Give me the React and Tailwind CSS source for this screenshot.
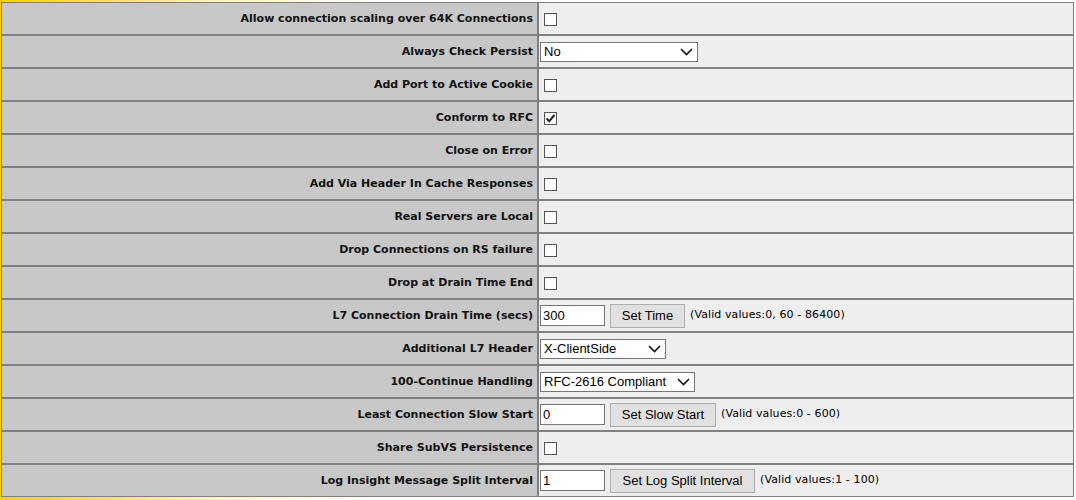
import React from "react";

const Checkbox = ({ checked }) => (
  <span className="ml-[5px] mt-[1px] inline-flex h-[13px] w-[13px] items-center justify-center border border-[#555555] bg-white">
    {checked && (
      <svg width="11" height="11" viewBox="0 0 11 11">
        <path d="M1.5 5.5 L4.2 8.2 L9.5 2" fill="none" stroke="#222" strokeWidth="2" />
      </svg>
    )}
  </span>
);

const Select = ({ value, width }) => (
  <div
    className={`ml-[1px] flex h-[20px] items-center justify-between border border-[#767676] bg-white pl-[3px] pr-[4px] text-[13px] text-black ${width}`}
    style={{ fontFamily: '"Liberation Sans", Arial, sans-serif' }}
  >
    <span>{value}</span>
    <svg width="13" height="8" viewBox="0 0 13 8">
      <path d="M1 1 L6.5 6.5 L12 1" fill="none" stroke="#111" strokeWidth="1.6" />
    </svg>
  </div>
);

const NumberField = ({ value, button, buttonWidth, hint }) => (
  <div className="ml-[1px] flex items-center">
    <div
      className="flex h-[21px] w-[65px] items-center border border-[#767676] bg-white pl-[2px] text-[13px] text-black"
      style={{ fontFamily: '"Liberation Sans", Arial, sans-serif' }}
    >
      {value}
    </div>
    <button
      className={`ml-[5px] h-[24px] border border-[#adadad] bg-[#e1e1e1] text-[13px] text-black ${buttonWidth}`}
      style={{ fontFamily: '"Liberation Sans", Arial, sans-serif' }}
    >
      {button}
    </button>
    <span className="ml-[5px] text-[11px] tracking-[0.1px] text-black">{hint}</span>
  </div>
);

const rows = [
  { label: "Allow connection scaling over 64K Connections", control: <Checkbox /> },
  { label: "Always Check Persist", control: <Select value="No" width="w-[158px]" /> },
  { label: "Add Port to Active Cookie", control: <Checkbox /> },
  { label: "Conform to RFC", control: <Checkbox checked /> },
  { label: "Close on Error", control: <Checkbox /> },
  { label: "Add Via Header In Cache Responses", control: <Checkbox /> },
  { label: "Real Servers are Local", control: <Checkbox /> },
  { label: "Drop Connections on RS failure", control: <Checkbox /> },
  { label: "Drop at Drain Time End", control: <Checkbox /> },
  {
    label: "L7 Connection Drain Time (secs)",
    control: (
      <NumberField value="300" button="Set Time" buttonWidth="w-[75px]" hint="(Valid values:0, 60 - 86400)" />
    ),
  },
  { label: "Additional L7 Header", control: <Select value="X-ClientSide" width="w-[126px]" /> },
  { label: "100-Continue Handling", control: <Select value="RFC-2616 Compliant" width="w-[155px]" /> },
  {
    label: "Least Connection Slow Start",
    control: (
      <NumberField value="0" button="Set Slow Start" buttonWidth="w-[106px]" hint="(Valid values:0 - 600)" />
    ),
  },
  { label: "Share SubVS Persistence", control: <Checkbox /> },
  {
    label: "Log Insight Message Split Interval",
    control: (
      <NumberField value="1" button="Set Log Split Interval" buttonWidth="w-[145px]" hint="(Valid values:1 - 100)" />
    ),
  },
];

const App = () => {
  return (
    <div
      className="h-[500px] w-[1076px] overflow-hidden bg-[linear-gradient(to_right,#ffd000,#fff3c0_20%,#ffffff_35%)] pl-[1px] pt-[2px]"
      style={{ fontFamily: '"DejaVu Sans", Verdana, sans-serif' }}
    >
      <div className="w-[1073px]">
        {rows.map((row) => (
          <div key={row.label} className="flex">
            <div className="flex h-[33px] w-[537px] items-center justify-end border border-[#808080] bg-[#c8c8c8] pr-[4px] pt-[2px] text-[11px] font-bold text-[#111111]">
              {row.label}
            </div>
            <div className="flex h-[33px] w-[536px] items-center border border-[#808080] bg-[#eeeeee]">
              {row.control}
            </div>
          </div>
        ))}
      </div>
    </div>
  );
};

export default App;
